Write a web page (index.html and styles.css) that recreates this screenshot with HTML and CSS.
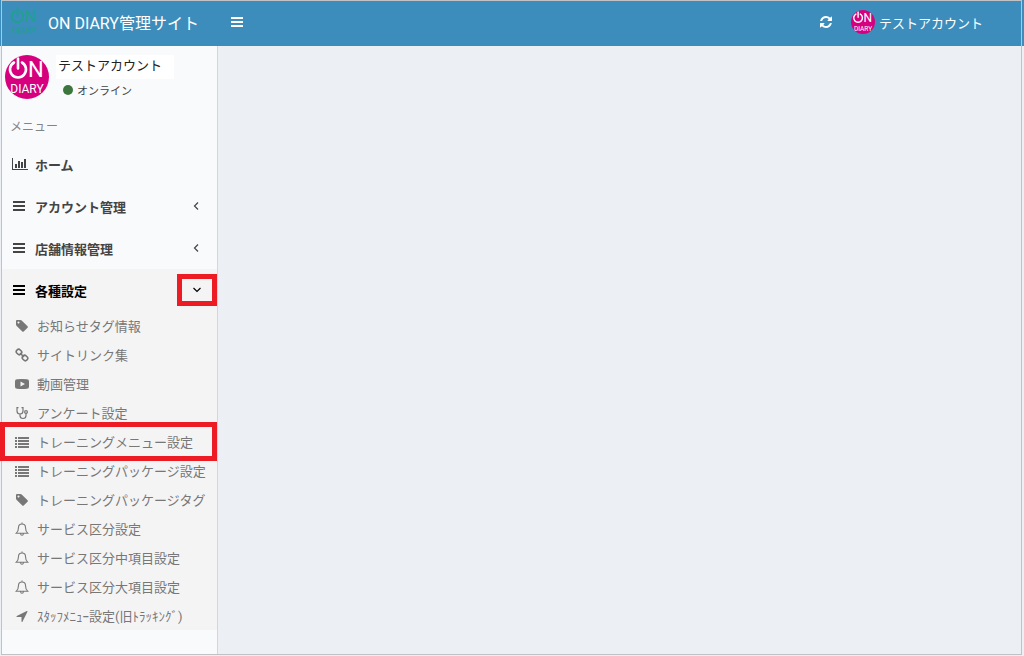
FILE: index.html
```html
<!DOCTYPE html>
<html lang="ja">
<head>
  <meta charset="UTF-8">
  <meta name="viewport" content="width=device-width, initial-scale=1.0">
  <title>ON DIARY管理サイト</title>
  <link rel="stylesheet" href="styles.css">
</head>
<body>

  <!-- Shared icons -->
  <svg class="sprite" aria-hidden="true">
    <symbol id="logo" viewBox="0 0 44 44">
      <path d="M9 7.500a8 8 0 1 0 8 0M13 3.500v10" fill="none" stroke="currentColor" stroke-width="2.600" stroke-linecap="round"/>
      <text class="logo-big" x="23" y="22">N</text>
      <text class="logo-small" x="22" y="38" text-anchor="middle">DIARY</text>
    </symbol>
    <symbol id="bars" viewBox="0 0 14 14">
      <path d="M1 2h12v2H1zM1 6h12v2H1zM1 10h12v2H1z"/>
    </symbol>
    <symbol id="chart" viewBox="0 0 16 14">
      <path d="M0 1h1v11h15v1H0zM3 7h2v4H3zM6 4h2v7H6zM9 5h2v6H9zM12 2h2v9h-2z"/>
    </symbol>
    <symbol id="list" viewBox="0 0 14 14">
      <path d="M0 2h2v2H0zM3 2h11v2H3zM0 5h2v2H0zM3 5h11v2H3zM0 8h2v2H0zM3 8h11v2H3zM0 11h2v2H0zM3 11h11v2H3z"/>
    </symbol>
    <symbol id="tag" viewBox="0 0 1792 1792">
      <path d="M576 448q0-53-37.500-90.500t-90.500-37.500-90.500 37.500-37.500 90.500 37.500 90.500 90.500 37.500 90.500-37.500 37.500-90.500zm1067 576q0 53-37 90l-491 492q-39 37-91 37-53 0-90-37l-715-716q-38-37-64.500-101t-26.500-117v-416q0-52 38-90t90-38h416q53 0 117 26.500t102 64.500l715 714q37 39 37 91z"/>
    </symbol>
    <symbol id="refresh" viewBox="0 0 1792 1792">
      <path d="M1639 1056q0 5-1 7-64 268-268 434.500t-478 166.500q-146 0-282.500-55t-243.500-157l-129 129q-19 19-45 19t-45-19-19-45v-448q0-26 19-45t45-19h448q26 0 45 19t19 45-19 45l-137 137q71 66 161 102t187 36q134 0 250-65t186-179q11-17 53-117 8-23 30-23h192q13 0 22.500 9.500t9.500 22.500zm25-800v448q0 26-19 45t-45 19h-448q-26 0-45-19t-19-45 19-45l138-138q-148-137-349-137-134 0-250 65t-186 179q-11 17-53 117-8 23-30 23h-199q-13 0-22.500-9.500t-9.500-22.500v-7q65-268 270-434.500t480-166.500q146 0 284 55.500t245 156.500l130-129q19-19 45-19t45 19 19 45z"/>
    </symbol>
    <symbol id="arrow" viewBox="0 0 1792 1792">
      <path d="M1593 349l-640 1280q-17 35-57 35-5 0-15-2-22-5-35.500-22.500t-13.500-39.500v-576h-576q-22 0-39.500-13.500t-22.500-35.500 4-42 29-30l1280-640q13-7 29-7 27 0 45 19 15 14 18.500 34.500t-6.500 39.500z"/>
    </symbol>
    <symbol id="link" viewBox="0 0 14 14">
      <g fill="none" stroke="currentColor" stroke-width="1.600">
        <rect x="1.200" y="1.700" width="5.600" height="4.600" rx="2.200" transform="rotate(45 4 4)"/>
        <rect x="7.200" y="7.700" width="5.600" height="4.600" rx="2.200" transform="rotate(45 10 10)"/>
        <path d="M5 5l4 4"/>
      </g>
    </symbol>
    <symbol id="video" viewBox="0 0 14 14">
      <path fill-rule="evenodd" d="M2 2.300q5-.6 10 0 2 .2 2 2v5.400q0 1.800-2 2-5 .6-10 0-2-.2-2-2V4.300q0-1.800 2-2zM5.500 4.500v5l4.500-2.500z"/>
    </symbol>
    <symbol id="stethoscope" viewBox="0 0 14 14">
      <g fill="none" stroke="currentColor" stroke-width="1.200">
        <path d="M3.500 1.600H2V5q0 3 3 3t3-3V1.600H6.500M5 8v1.500Q5 12.500 8 12.500t3-3V7.500"/>
        <circle cx="11" cy="6" r="1.400"/>
      </g>
    </symbol>
    <symbol id="bell" viewBox="0 0 14 14">
      <path fill="none" stroke="currentColor" stroke-width="1.100" d="M7 .5v1.300M1.300 11.200Q3.500 9.200 3.500 5.500 3.500 2 7 2t3.500 3.500q0 3.700 2.200 5.700zM5.500 11.500q.2 1.700 1.500 1.700t1.500-1.700"/>
    </symbol>
    <symbol id="angle" viewBox="0 0 14 14">
      <path fill="none" stroke="currentColor" stroke-width="1.200" d="M9 3.500L5.500 7 9 10.500"/>
    </symbol>
  </svg>

  <div class="wrapper">
    <header class="main-header">
      <a class="brand" href="#">
        <svg class="brand-logo"><use href="#logo"/></svg>
        <span>ON DIARY管理サイト</span>
      </a>
      <button class="nav-button" type="button" aria-label="メニュー切替"><svg class="icon"><use href="#bars"/></svg></button>
      <nav class="header-right">
        <button class="nav-button" type="button" aria-label="更新"><svg class="icon"><use href="#refresh"/></svg></button>
        <a class="account" href="#">
          <svg class="avatar avatar-small"><use href="#logo"/></svg>
          <span>テストアカウント</span>
        </a>
      </nav>
    </header>

    <div class="page">
      <aside class="sidebar">
        <div class="user-panel">
          <svg class="avatar"><use href="#logo"/></svg>
          <div class="user-info">
            <p class="user-name">テストアカウント</p>
            <a class="user-status" href="#"><span class="dot"></span>オンライン</a>
          </div>
        </div>

        <p class="menu-title">メニュー</p>
        <ul class="menu">
          <li><a class="menu-link" href="#"><svg class="icon icon-wide"><use href="#chart"/></svg><span>ホーム</span></a></li>
          <li><a class="menu-link" href="#"><svg class="icon"><use href="#bars"/></svg><span>アカウント管理</span><svg class="icon angle"><use href="#angle"/></svg></a></li>
          <li><a class="menu-link" href="#"><svg class="icon"><use href="#bars"/></svg><span>店舗情報管理</span><svg class="icon angle"><use href="#angle"/></svg></a></li>
          <li class="open">
            <a class="menu-link" href="#"><svg class="icon"><use href="#bars"/></svg><span>各種設定</span><span class="toggle marked"><svg class="icon angle-down"><use href="#angle"/></svg></span></a>
            <ul class="submenu">
              <li><a href="#"><svg class="icon"><use href="#tag"/></svg>お知らせタグ情報</a></li>
              <li><a href="#"><svg class="icon"><use href="#link"/></svg>サイトリンク集</a></li>
              <li><a href="#"><svg class="icon"><use href="#video"/></svg>動画管理</a></li>
              <li><a href="#"><svg class="icon"><use href="#stethoscope"/></svg>アンケート設定</a></li>
              <li class="marked"><a href="#"><svg class="icon"><use href="#list"/></svg>トレーニングメニュー設定</a></li>
              <li><a href="#"><svg class="icon"><use href="#list"/></svg>トレーニングパッケージ設定</a></li>
              <li><a href="#"><svg class="icon"><use href="#tag"/></svg>トレーニングパッケージタグ</a></li>
              <li><a href="#"><svg class="icon"><use href="#bell"/></svg>サービス区分設定</a></li>
              <li><a href="#"><svg class="icon"><use href="#bell"/></svg>サービス区分中項目設定</a></li>
              <li><a href="#"><svg class="icon"><use href="#bell"/></svg>サービス区分大項目設定</a></li>
              <li><a href="#"><svg class="icon"><use href="#arrow"/></svg>ｽﾀｯﾌﾒﾆｭｰ設定(旧ﾄﾗｯｷﾝｸﾞ)</a></li>
            </ul>
          </li>
        </ul>
      </aside>
      <main class="content"></main>
    </div>
  </div>

</body>
</html>
```
FILE: styles.css
```css
* {
  box-sizing: border-box;
}

body {
  display: flex;
  min-height: 100vh;
  margin: 0;
  padding: 0 2px 1px 1px;
  font-family: Roboto, "Noto Sans CJK JP", sans-serif;
  font-size: 13px;
  background: linear-gradient(#3c8dbc 46px, #ecf0f5 46px);
}

a {
  color: inherit;
  text-decoration: none;
}

p, ul {
  margin: 0;
  padding: 0;
}

ul {
  list-style: none;
}

.sprite {
  position: absolute;
  width: 0;
  height: 0;
}

.icon {
  flex: none;
  width: 14px;
  height: 14px;
  fill: currentColor;
}

.icon-wide {
  width: 16px;
}

.logo-big {
  font-size: 22px;
  fill: currentColor;
}

.logo-small {
  font-size: 12px;
  fill: currentColor;
}

.wrapper {
  flex: 1;
  display: flex;
  flex-direction: column;
  border: 1px solid #c0c2c6;
}

/* Header */
.main-header {
  display: flex;
  align-items: center;
  height: 45px;
  padding: 0 38px 3px 6px;
  background: #3c8dbc;
  color: #fff;
}

.brand {
  display: flex;
  align-items: center;
  gap: 8px;
  width: 218px;
  font-size: 16px;
  white-space: nowrap;
}

.brand-logo {
  width: 32px;
  height: 32px;
  color: #20a08e;
}

.nav-button {
  display: flex;
  padding: 4px;
  border: 0;
  background: none;
  color: inherit;
  cursor: pointer;
}

.header-right {
  display: flex;
  align-items: center;
  gap: 14px;
  margin-left: auto;
}

.account {
  display: flex;
  align-items: center;
  gap: 4px;
}

.avatar {
  flex: none;
  width: 44px;
  height: 44px;
  border-radius: 50%;
  background: #d6007f;
  color: #fff;
}

.avatar-small {
  width: 24px;
  height: 24px;
}

/* Sidebar */
.page {
  flex: 1;
  display: flex;
}

.sidebar {
  width: 216px;
  border-right: 1px solid #d2d6de;
  background: #f9fafc;
}

.content {
  flex: 1;
  background: #ecf0f5;
}

.user-panel {
  display: flex;
  gap: 7px;
  padding: 9px 3px 0;
}

.user-info {
  width: 118px;
}

.user-name {
  height: 24px;
  line-height: 22px;
  padding-left: 2px;
  background: #fff;
  color: #222;
}

.user-status {
  display: flex;
  align-items: center;
  gap: 4px;
  height: 22px;
  padding-left: 7px;
  font-size: 11px;
  color: #444;
}

.dot {
  width: 10px;
  height: 10px;
  border-radius: 50%;
  background: #3c763d;
}

.menu-title {
  padding: 17px 8px 7px;
  line-height: 18px;
  font-size: 12px;
  color: #848484;
}

.menu-link {
  display: flex;
  align-items: center;
  gap: 9px;
  height: 42px;
  padding-left: 10px;
  font-weight: 600;
  color: #444;
}

.icon-wide + span {
  margin-left: -2px;
}

.angle {
  margin-left: auto;
  margin-right: 14px;
}

.angle-down {
  transform: rotate(-90deg);
}

.open {
  background: #f4f4f5;
}

.open > .menu-link {
  color: #000;
}

.toggle {
  display: flex;
  align-items: center;
  justify-content: center;
  width: 40px;
  height: 32px;
  margin-left: auto;
}

.submenu a {
  display: flex;
  align-items: center;
  gap: 8px;
  height: 29px;
  padding-left: 13px;
  color: #777;
  white-space: nowrap;
}

/* Red frames round the highlighted controls */
.marked {
  position: relative;
}

.marked::after {
  content: "";
  position: absolute;
  inset: 0;
  border: 5px solid #ed1c24;
}

.submenu .marked::after {
  inset: -5px 0 -5px -2px;
}
```
